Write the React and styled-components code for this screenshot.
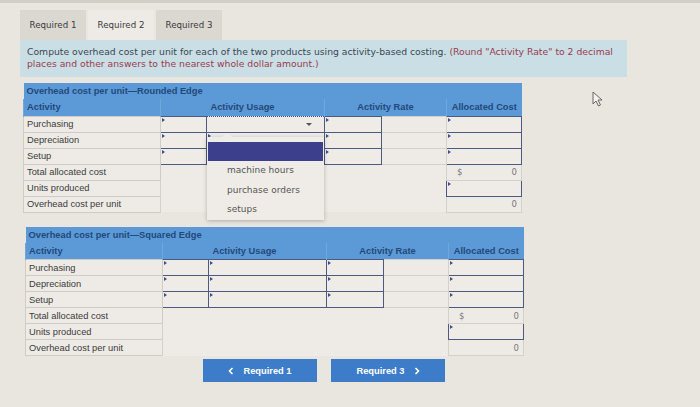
import React from "react";
import styled, { createGlobalStyle } from "styled-components";

const GlobalStyle = createGlobalStyle`
  html, body {
    margin: 0;
    background: #e9e6e0;
  }
  body {
    font-family: "DejaVu Sans", Verdana, sans-serif;
  }
`;

const Page = styled.div`
  position: relative;
  width: 700px;
  height: 407px;
  overflow: hidden;
  box-sizing: border-box;
  border-top: 3px solid #d2cfc9;
  padding: 7px 0 0 20px;
`;

const Tabs = styled.div`
  display: flex;
  gap: 2px;
`;

const Tab = styled.div`
  width: 66px;
  height: 30px;
  display: flex;
  align-items: center;
  justify-content: center;
  font-size: 8.7px;
  color: #3a3a3a;
  background: ${(p) => (p.$active ? "#eeebe6" : "#dbd8d2")};
`;

const Instructions = styled.div`
  width: 607px;
  box-sizing: border-box;
  padding: 6px 5px 7px 7px;
  background: #c9dfe5;
  font-size: 9.25px;
  line-height: 12px;
  color: #3b4654;

  span {
    color: #9b3a4d;
  }
`;

const Table = styled.table`
  position: relative;
  border-collapse: collapse;
  table-layout: fixed;
  width: 498px;
  margin: ${(p) => p.$margin};
  font-family: "Liberation Sans", Arial, sans-serif;
  font-size: 9.3px;
  color: #3a3a3a;

  td,
  th {
    box-sizing: border-box;
  }
`;

const TitleCell = styled.td`
  height: 16px;
  padding: 0 3px;
  background: #5b9ad6;
  color: #24487a;
  font-weight: bold;
`;

const HeadCell = styled.th`
  height: 17px;
  padding: 0 3px;
  background: #5b9ad6;
  color: #24487a;
  font-weight: bold;
  text-align: ${(p) => p.$align || "center"};
  border-left: 1px solid #6fa8de;
`;

const LabelCell = styled.td`
  height: 16px;
  padding: 0 3px;
  background: #eeebe6;
  border: 1px solid #cfccc6;
  white-space: nowrap;
`;

const InputCell = styled.td`
  position: relative;
  height: 16px;
  background: #efece8;
  border: 1.5px solid #4c5a7e;

  &::before {
    content: "";
    position: absolute;
    top: 1px;
    left: 1px;
    border-top: 2px solid transparent;
    border-bottom: 2px solid transparent;
    border-left: 3px solid #3c4f86;
  }
`;

const PlainCell = styled.td`
  background: #eeebe6;
  border: 1px solid #d4d1cb;
`;

const BlankCell = styled.td`
  background: #eeebe6;
  border-left: 1px solid #d4d1cb;
`;

const AmountCell = styled.td`
  height: 16px;
  padding: 0 4px 0 10px;
  background: #eeebe6;
  border: 1px solid #d4d1cb;
  font-family: "DejaVu Sans", Verdana, sans-serif;
  font-size: 8.5px;
  color: #777;
`;

const Amount = styled.div`
  display: flex;
  justify-content: ${(p) => (p.$dollar ? "space-between" : "flex-end")};
`;

const SelectCell = styled.td`
  position: relative;
  height: 16px;
  background: #efece8;
  border: 1px dotted #3b4b9c;
`;

const SelectArrow = styled.span`
  position: absolute;
  right: 12px;
  top: 6px;
  border-left: 3px solid transparent;
  border-right: 3px solid transparent;
  border-top: 3px solid #555;
`;

const DropList = styled.div`
  position: absolute;
  z-index: 2;
  left: 0;
  top: calc(100% + 5px);
  width: 117px;
  height: 83px;
  box-sizing: border-box;
  padding-top: 5px;
  background: #efece7;
  box-shadow: 0 1px 4px rgba(0, 0, 0, 0.25);
  font-family: "DejaVu Sans", Verdana, sans-serif;
  font-size: 9px;
  color: #555;

  &::before {
    content: "";
    position: absolute;
    top: -4px;
    left: 15px;
    border-left: 5px solid transparent;
    border-right: 5px solid transparent;
    border-bottom: 4px solid #efece7;
  }
`;

const DropItem = styled.div`
  height: 19.5px;
  line-height: 19.5px;
  padding-left: 19px;
  margin: 0 1px;
  background: ${(p) => (p.$selected ? "#3b3f8c" : "transparent")};
`;

const Buttons = styled.div`
  display: flex;
  gap: 14px;
  margin: 3px 0 0 183px;
`;

const NavButton = styled.button`
  width: 114px;
  height: 23px;
  display: flex;
  align-items: center;
  justify-content: center;
  gap: 9px;
  border: none;
  background: #3c7cc9;
  color: #fff;
  font-family: "Liberation Sans", Arial, sans-serif;
  font-weight: bold;
  font-size: 9.3px;
`;

const Cursor = styled.svg`
  position: absolute;
  left: 592px;
  top: 88px;
`;

const Chevron = ({ dir }) => (
  <svg width="6" height="8" viewBox="0 0 6 8">
    <path
      d={dir === "left" ? "M4.5 1 L1.5 4 L4.5 7" : "M1.5 1 L4.5 4 L1.5 7"}
      fill="none"
      stroke="#fff"
      strokeWidth="1.6"
    />
  </svg>
);

const activities = ["Purchasing", "Depreciation", "Setup"];

const CostTable = ({ title, withDropdown, margin }) => (
  <Table $margin={margin}>
    <colgroup>
      <col style={{ width: 137 }} />
      <col style={{ width: 46 }} />
      <col style={{ width: 118 }} />
      <col style={{ width: 57 }} />
      <col style={{ width: 65 }} />
      <col style={{ width: 75 }} />
    </colgroup>
    <tbody>
      <tr>
        <TitleCell colSpan={6}>{title}</TitleCell>
      </tr>
      <tr>
        <HeadCell $align="left">Activity</HeadCell>
        <HeadCell colSpan={2}>Activity Usage</HeadCell>
        <HeadCell colSpan={2}>Activity Rate</HeadCell>
        <HeadCell>Allocated Cost</HeadCell>
      </tr>
      {activities.map((name, i) => (
        <tr key={name}>
          <LabelCell>{name}</LabelCell>
          <InputCell />
          {withDropdown && i === 0 ? (
            <SelectCell>
              <SelectArrow />
              <DropList>
                <DropItem $selected />
                <DropItem>machine hours</DropItem>
                <DropItem>purchase orders</DropItem>
                <DropItem>setups</DropItem>
              </DropList>
            </SelectCell>
          ) : (
            <InputCell />
          )}
          <InputCell />
          <PlainCell />
          <InputCell />
        </tr>
      ))}
      <tr>
        <LabelCell>Total allocated cost</LabelCell>
        <BlankCell colSpan={4} rowSpan={3} />
        <AmountCell>
          <Amount $dollar>
            <span>$</span>
            <span>0</span>
          </Amount>
        </AmountCell>
      </tr>
      <tr>
        <LabelCell>Units produced</LabelCell>
        <InputCell />
      </tr>
      <tr>
        <LabelCell>Overhead cost per unit</LabelCell>
        <AmountCell>
          <Amount>0</Amount>
        </AmountCell>
      </tr>
    </tbody>
  </Table>
);

export default function App() {
  return (
    <>
      <GlobalStyle />
      <Page>
        <Tabs>
          <Tab>Required 1</Tab>
          <Tab $active>Required 2</Tab>
          <Tab>Required 3</Tab>
        </Tabs>
        <Instructions>
          Compute overhead cost per unit for each of the two products using
          activity-based costing. <span>(Round "Activity Rate" to 2 decimal
          places and other answers to the nearest whole dollar amount.)</span>
        </Instructions>
        <CostTable
          title="Overhead cost per unit—Rounded Edge"
          withDropdown
          margin="6px 0 0 3px"
        />
        <CostTable
          title="Overhead cost per unit—Squared Edge"
          margin="14px 0 0 5px"
        />
        <Buttons>
          <NavButton>
            <Chevron dir="left" />
            Required 1
          </NavButton>
          <NavButton>
            Required 3
            <Chevron dir="right" />
          </NavButton>
        </Buttons>
        <Cursor width="12" height="16" viewBox="0 0 12 16">
          <path
            d="M1 1 L1 13 L4 10 L6.5 15 L8.5 14 L6 9 L10 9 Z"
            fill="#f4f2ee"
            stroke="#666"
            strokeWidth="1"
          />
        </Cursor>
      </Page>
    </>
  );
}
